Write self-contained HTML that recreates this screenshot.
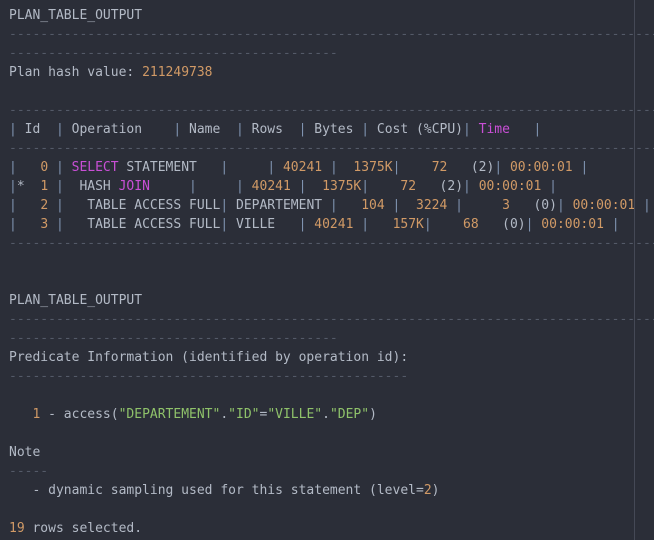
<!DOCTYPE html>
<html><head><meta charset="utf-8">
<style>
html,body{margin:0;padding:0;background:#2b2e38;width:654px;height:540px;overflow:hidden;}
pre{margin:0;padding:6px 0 0 9px;font-family:"DejaVu Sans Mono","Liberation Mono",monospace;font-size:13px;line-height:19px;color:#b3bac6;white-space:pre;overflow:hidden;width:645px;}
.d{color:#545a68}
.p{color:#7f93b0}
.n{color:#d19a66}
.m{color:#c94fd6}
.g{color:#8fc26a}
.vl{position:absolute;left:634px;top:0;width:1px;height:540px;background:#454956;}
</style></head><body>
<div class="vl"></div>
<pre>PLAN_TABLE_OUTPUT
<span class="d">------------------------------------------------------------------------------------------</span>
<span class="d">------------------------------------------</span>
Plan hash value: <span class="n">211249738</span>

<span class="d">------------------------------------------------------------------------------------------</span>
<span class="p">|</span> Id  <span class="p">|</span> Operation    <span class="p">|</span> Name  <span class="p">|</span> Rows  <span class="p">|</span> Bytes <span class="p">|</span> Cost (%CPU)<span class="p">|</span> <span class="m">Time</span>   <span class="p">|</span>
<span class="d">------------------------------------------------------------------------------------------</span>
<span class="p">|</span>   <span class="n">0</span> <span class="p">|</span> <span class="m">SELECT</span> STATEMENT   <span class="p">|</span>     <span class="p">|</span> <span class="n">40241</span> <span class="p">|</span>  <span class="n">1375K</span><span class="p">|</span>    <span class="n">72</span>   (2)<span class="p">|</span> <span class="n">00:00:01</span> <span class="p">|</span>
<span class="p">|</span>*  <span class="n">1</span> <span class="p">|</span>  HASH <span class="m">JOIN</span>     <span class="p">|</span>     <span class="p">|</span> <span class="n">40241</span> <span class="p">|</span>  <span class="n">1375K</span><span class="p">|</span>    <span class="n">72</span>   (2)<span class="p">|</span> <span class="n">00:00:01</span> <span class="p">|</span>
<span class="p">|</span>   <span class="n">2</span> <span class="p">|</span>   TABLE ACCESS FULL<span class="p">|</span> DEPARTEMENT <span class="p">|</span>   <span class="n">104</span> <span class="p">|</span>  <span class="n">3224</span> <span class="p">|</span>     <span class="n">3</span>   (0)<span class="p">|</span> <span class="n">00:00:01</span> <span class="p">|</span>
<span class="p">|</span>   <span class="n">3</span> <span class="p">|</span>   TABLE ACCESS FULL<span class="p">|</span> VILLE   <span class="p">|</span> <span class="n">40241</span> <span class="p">|</span>   <span class="n">157K</span><span class="p">|</span>    <span class="n">68</span>   (0)<span class="p">|</span> <span class="n">00:00:01</span> <span class="p">|</span>
<span class="d">------------------------------------------------------------------------------------------</span>


PLAN_TABLE_OUTPUT
<span class="d">------------------------------------------------------------------------------------------</span>
<span class="d">------------------------------------------</span>
Predicate Information (identified by operation id):
<span class="d">---------------------------------------------------</span>

   <span class="n">1</span> - access(<span class="g">"DEPARTEMENT"</span>.<span class="g">"ID"</span>=<span class="g">"VILLE"</span>.<span class="g">"DEP"</span>)

Note
<span class="d">-----</span>
   - dynamic sampling used for this statement (level=<span class="n">2</span>)

<span class="n">19</span> rows selected.
</pre>
</body></html>
